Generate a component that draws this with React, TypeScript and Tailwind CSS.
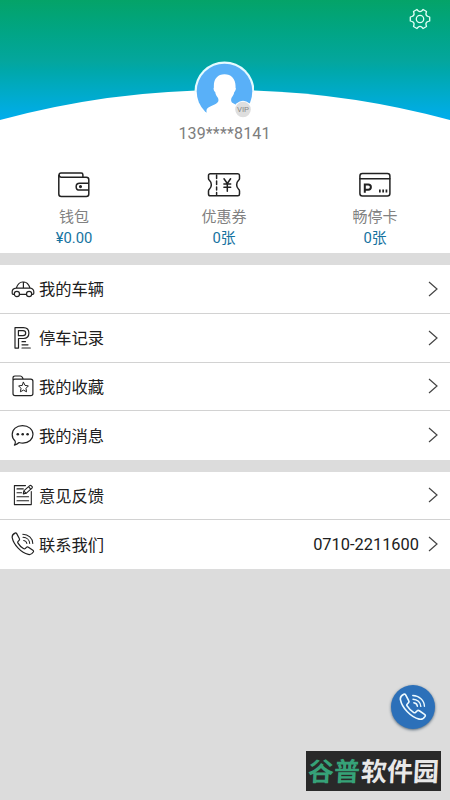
import type { ReactNode } from "react";

const FONT = "font-['Roboto','Noto_Sans_CJK_SC',sans-serif]";

function PhoneIcon({ className, strokeWidth }: { className: string; strokeWidth: number }) {
  return (
    <svg viewBox="0 0 24 24" className={className} fill="none" stroke="currentColor" strokeWidth={strokeWidth} strokeLinecap="round" strokeLinejoin="round">
      <path d="M4.1 1.1C2.2 2 .9 3.6 1.2 5.6 2.6 12.8 10.3 20.8 17.3 22.4c2.1.5 3.9-.6 5-2.4.4-.7.2-1.3-.4-1.7l-4.5-3.1c-.7-.5-1.4-.4-2 .2l-1.2 1.2c-.6.5-1.2.4-1.8 0-2.2-1.5-4.2-3.5-5.4-5.5-.4-.6-.4-1.200.1-1.700l1-1.100c.5-.5.6-1.100.2-1.800L5.700 1.600C5.300 1 4.700.8 4.100 1.100Z" />
      <path strokeWidth={strokeWidth * 0.85} d="M11.800 2.200c5.500.1 9.900 4 10 9.200M12 5.300c3.700.1 6.500 2.700 6.700 6.200M12.700 8.400c1.800.3 2.900 1.400 3.100 3.100" />
    </svg>
  );
}

function RowIcon({ children }: { children: ReactNode }) {
  return (
    <svg viewBox="0 0 24 24" className="h-6 w-6 shrink-0" fill="none" stroke="#222" strokeWidth="1.200" strokeLinecap="round" strokeLinejoin="round">
      {children}
    </svg>
  );
}

const carIcon = (
  <RowIcon>
    <path d="M3.200 17.300H2.100c-.6 0-.9-.4-.9-1v-1.800c0-1.700 1.400-2.900 4-3.300C6.700 7 8.200 5 11.500 5h1.500c3 0 4.600 2.200 6.100 6 2.400.5 3.700 1.800 3.700 3.800v1.500c0 .6-.4 1-1 1h-1M8.500 17.300h6.900M5.200 11.200h13.900M12.400 5.200v6" />
    <circle cx="5.900" cy="17" r="2.600" />
    <circle cx="18.100" cy="17" r="2.600" />
  </RowIcon>
);

const parkingIcon = (
  <RowIcon>
    <path d="M4 1.700h8.400c3.500 0 5.500 2.200 5.500 5.400s-2.200 5.400-5.500 5.400H7.500v9.600H4Z" />
    <path d="M7.400 4.600H12c1.700 0 2.700 1 2.700 2.500S13.700 9.700 12 9.700H7.400Z" />
    <path d="M11 15.700h3.500M11 18.800h6M11 22h8.300" />
  </RowIcon>
);

const favoriteIcon = (
  <RowIcon>
    <path d="M2 6V3.900C2 2.700 2.700 2 3.900 2h5.400c1.100 0 1.600.4 2 1.200l.9 1.900h7.600c1.300 0 2.100.8 2.100 2.100v12.400c0 1.300-.8 2.100-2.100 2.100H4.100C2.800 21.700 2 20.900 2 19.600V7c0-1.200.7-1.900 1.900-1.900H12" />
    <path strokeWidth="1" d="m12.500 8.300 1.500 3.100 3.400.5-2.400 2.400.5 3.500-3-1.700-3.100 1.700.6-3.500-2.400-2.400 3.400-.5Z" />
  </RowIcon>
);

const messageIcon = (
  <RowIcon>
    <path d="M3.400 22.100c1-1.200 1.200-2.500.8-3.900C2.200 16.500 1.200 14.200 1.200 11.600c0-5.200 4.300-9 10.300-9s10.500 3.800 10.500 8.700-4.200 8.800-10.100 8.800c-1.400 0-2.700-.2-3.800-.6-1.500 1.400-3 2.200-4.700 2.600Z" />
    <g fill="#222" stroke="none">
      <circle cx="6.800" cy="11.200" r="1.300" /><circle cx="11.700" cy="11.200" r="1.300" /><circle cx="16.600" cy="11.200" r="1.300" />
    </g>
  </RowIcon>
);

const feedbackIcon = (
  <RowIcon>
    <path strokeWidth="1.100" d="M14.500 2.600H3.400v19h16.900V8.500M6 5.900h6.300M6 9.700h4.600M6 13.800h11.600M6 17.800h11.600" />
    <path strokeWidth="1.100" d="m12.300 10.900.5-3.100 5.900-5.100c.6-.5 1.200-.4 1.700.1l.6.700c.5.500.4 1.200-.1 1.700l-5.800 5.100ZM17.500 3.700l2.400 2.600M12.800 7.800l2.300 2.500" />
  </RowIcon>
);

const walletIcon = (
  <>
    <path d="M5 6.200c-2.300-.4-2.600-4.200 0-4.200h20.200c1 0 1.700.7 1.700 1.700v2.200M2.800 4v19c0 1.500.9 2.500 2.500 2.500h25c1.500 0 2.500-1 2.500-2.500V8.700c0-1.600-1-2.500-2.500-2.500H5M32.600 12.200h-9c-4.600 0-4.600 6.900 0 6.900h9" />
    <circle cx="24.500" cy="15.600" r=".8" fill="#222" />
  </>
);

const couponIcon = (
  <>
    <path d="M4.300 2.800h27.600c1 0 1.600.8 1.600 1.800v3.100c0 .7-.4 1.100-.9 1.600-2.600 2.500-2.600 6.500 0 9 .5.500.9.900.9 1.600V23c0 1-.6 1.800-1.600 1.800H4.300c-1 0-1.800-.8-1.800-1.800v-3.100c0-.7.4-1.100.9-1.600 2.600-2.500 2.600-6.500 0-9-.5-.5-.9-.9-.9-1.600V4.600c0-1 .8-1.800 1.800-1.800Z" />
    <path d="M10.600 4v3.500M10.600 10v3.500M10.600 16v3M10.600 21.500v2M18 7.800l3.300 4.700 3.300-4.700M21.300 12.500v7.700M17.900 13h6.800M17.900 16.300h6.800" />
  </>
);

const cardIcon = (
  <>
    <rect x="2.900" y="2.500" width="30" height="22.500" rx="2.500" />
    <path d="M3 7.800h29.800" />
    <path strokeWidth="2" strokeLinecap="butt" strokeLinejoin="miter" d="M7.800 21.800v-8.300h3.400c3.600 0 3.600 5.200 0 5.200H7.800" />
    <path strokeDasharray="1.700 1.600" strokeLinecap="butt" strokeWidth="3" d="M22 20h8.300" />
  </>
);

function Stat({ icon, label, value }: { icon: ReactNode; label: string; value: string }) {
  return (
    <div className="flex flex-col items-center">
      <svg viewBox="0 0 36 28" className="h-7 w-9" fill="none" stroke="#222" strokeWidth="1.500" strokeLinecap="round" strokeLinejoin="round">{icon}</svg>
      <div className="mt-[7px] text-[15px] leading-[22px] text-[#818181]">{label}</div>
      <div className="text-[14.800px] leading-[21px] text-[#16739f]">{value}</div>
    </div>
  );
}

function MenuRow({ icon, label, detail, border = false }: { icon: ReactNode; label: string; detail?: string; border?: boolean }) {
  return (
    <div className={"flex items-center bg-white pl-[11px] pr-3 text-[#202020] " + (border ? "h-[48.750px] border-b border-[#d2d2d2]" : "h-[48.250px]")}>
      {icon}
      <span className="ml-1 pt-[3px] text-[16.300px] leading-6">{label}</span>
      <span className="ml-auto pt-[2px] text-[16.400px] leading-6">{detail}</span>
      <svg viewBox="0 0 10 16" className="ml-[9px] h-4 w-[10px]" fill="none" stroke="#444" strokeWidth="1.200"><path d="m1 1 8 7-8 7" /></svg>
    </div>
  );
}

export default function App() {
  return (
    <div className={"relative h-[800px] w-[450px] overflow-hidden bg-[#dcdcdc] " + FONT}>
      <header className="h-[253px] bg-white">
        <div className="relative h-[122px] bg-gradient-to-b from-[#04a368] via-[#04a69d] via-50% to-[#00adf0]">
          <svg viewBox="0 0 450 122" className="absolute inset-0 h-full w-full"><path fill="#fff" d="M0 120Q111 90 225 90T450 120v2H0Z" /></svg>
          <svg viewBox="0 0 24 24" className="absolute left-[408px] top-[7px] h-6 w-6" fill="none" stroke="#e1fff6" strokeWidth="1.300" strokeLinejoin="round">
            <path d="m8.900 2.500 1.200 1.300c1 .9 2.800.9 3.800 0l1.200-1.300 3.400 2-.5 1.700c-.3 1.400.6 2.900 2 3.300l1.700.5v4l-1.700.5c-1.400.4-2.300 1.900-2 3.300l.5 1.700-3.400 2-1.200-1.300c-1-.9-2.800-.9-3.800 0l-1.200 1.300-3.400-2 .5-1.700c.3-1.400-.6-2.900-2-3.300L2.300 14v-4L4 9.500c1.400-.4 2.300-1.900 2-3.300l-.5-1.700Z" />
            <circle cx="12" cy="12" r="3.700" />
          </svg>
          <svg viewBox="0 0 60 60" className="absolute left-[194px] top-[61px] h-[60px] w-[60px]">
            <circle cx="30.500" cy="30.500" r="30" fill="#e5fbff" />
            <path fill="#fff" d="M.5 30.500h60a30 30 0 0 1-60 0Z" />
            <circle cx="30.500" cy="30.500" r="27.800" fill="#59b0f8" />
            <path fill="#fff" d="M12.500 52v-3c1-3.500 7-4.500 10.500-7 1.700-1.300 1.900-3.600.7-5.500-1.300-1.400-2.200-3.200-2.400-5.200-1.300-.8-2.300-4-1.400-4.800-.6-8 3.400-13.200 10.600-13.200s11.600 5.200 11 13.200c1 .8-.1 4-1.300 4.800-.3 2-1.200 3.800-2.500 5.200-1 2.200-.8 4.200 1 5.500 3.300 2.200 9.500 3 10.500 7l2 11.700H9Z" />
            <circle cx="49" cy="48.500" r="8.800" fill="#fff" />
            <circle cx="49" cy="48.500" r="7.800" fill="#dedede" />
            <text x="49" y="51.300" textAnchor="middle" fontSize="7.800" fill="#888">VIP</text>
          </svg>
        </div>
        <div className="pr-px text-center text-[16px] leading-6 tracking-[0.150px] text-[#7d7d7d]">139****8141</div>
        <div className="mt-[25px] grid grid-cols-[148px_152px_150px]">
          <Stat icon={walletIcon} label="钱包" value="¥0.00" />
          <Stat icon={couponIcon} label="优惠券" value="0张" />
          <Stat icon={cardIcon} label="畅停卡" value="0张" />
        </div>
      </header>
      <section className="mt-3">
        <MenuRow icon={carIcon} label="我的车辆" border />
        <MenuRow icon={parkingIcon} label="停车记录" border />
        <MenuRow icon={favoriteIcon} label="我的收藏" border />
        <MenuRow icon={messageIcon} label="我的消息" />
      </section>
      <section className="mt-3">
        <MenuRow icon={feedbackIcon} label="意见反馈" border />
        <MenuRow icon={<PhoneIcon className="h-6 w-6" strokeWidth={1.2} />} label="联系我们" detail="0710-2211600" />
      </section>
      <button className="absolute left-[391px] top-[685px] flex h-11 w-11 items-center justify-center rounded-full bg-[#2c70b9] text-[#edfaff] shadow-[0_1px_3px_#536779]">
        <PhoneIcon className="h-7 w-7" strokeWidth={1.4} />
      </button>
      <div className="absolute left-[306px] top-[751px] flex h-10 w-[135px] items-center justify-center bg-[#292929] pt-[3px] text-[26px] font-bold leading-[37px] text-[#e8e8e8]">
        <span className="-skew-x-3 text-[#36a278]">谷普</span><span className="-skew-x-3">软件园</span>
      </div>
    </div>
  );
}
